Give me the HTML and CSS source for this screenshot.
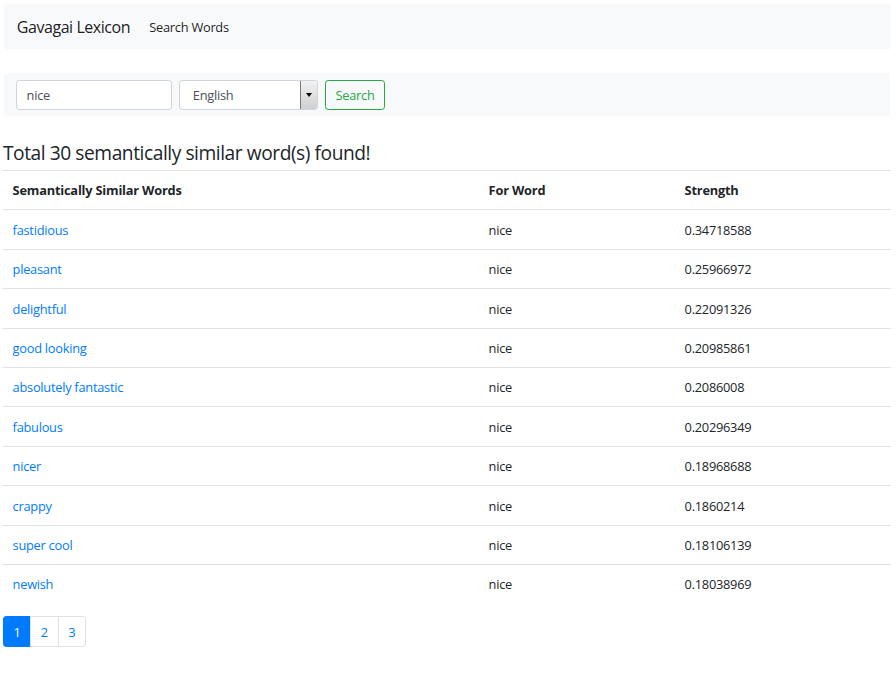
FILE: index.html
```html
<!DOCTYPE html>
<html lang="en">
<head>
<meta charset="utf-8">
<title>Gavagai Lexicon</title>
<link rel="stylesheet" href="styles.css">
</head>
<body>
<nav class="navbar">
  <a class="brand" href="#">Gavagai Lexicon</a>
  <a class="nav-link" href="#">Search Words</a>
</nav>

<form class="search-bar">
  <input class="field word-input" type="text" value="nice">
  <div class="field select">
    <span class="select-value">English</span>
    <span class="select-btn"><span class="caret"></span></span>
  </div>
  <button class="btn-search" type="button">Search</button>
</form>

<main class="content">
  <h4 class="result-title">Total 30 semantically similar word(s) found!</h4>
  <table class="results">
    <colgroup>
      <col class="c1"><col class="c2"><col class="c3">
    </colgroup>
    <thead>
      <tr><th>Semantically Similar Words</th><th>For Word</th><th>Strength</th></tr>
    </thead>
    <tbody>
      <tr><td><a href="#">fastidious</a></td><td>nice</td><td>0.34718588</td></tr>
      <tr><td><a href="#">pleasant</a></td><td>nice</td><td>0.25966972</td></tr>
      <tr><td><a href="#">delightful</a></td><td>nice</td><td>0.22091326</td></tr>
      <tr><td><a href="#">good looking</a></td><td>nice</td><td>0.20985861</td></tr>
      <tr><td><a href="#">absolutely fantastic</a></td><td>nice</td><td>0.2086008</td></tr>
      <tr><td><a href="#">fabulous</a></td><td>nice</td><td>0.20296349</td></tr>
      <tr><td><a href="#">nicer</a></td><td>nice</td><td>0.18968688</td></tr>
      <tr><td><a href="#">crappy</a></td><td>nice</td><td>0.1860214</td></tr>
      <tr><td><a href="#">super cool</a></td><td>nice</td><td>0.18106139</td></tr>
      <tr><td><a href="#">newish</a></td><td>nice</td><td>0.18038969</td></tr>
    </tbody>
  </table>
  <ul class="pagination">
    <li class="page active"><a href="#">1</a></li>
    <li class="page"><a href="#">2</a></li>
    <li class="page"><a href="#">3</a></li>
  </ul>
</main>
</body>
</html>
```

FILE: styles.css
```css
* { box-sizing: border-box; }

html, body {
  margin: 0;
  padding: 0;
  background: #fff;
}

body {
  font-family: "Open Sans", "Noto Sans", sans-serif;
  font-size: 12.8px;
  line-height: 19.2px;
  letter-spacing: -0.25px;
  color: #212529;
}

a { text-decoration: none; color: #007bff; }

.navbar {
  display: flex;
  align-items: center;
  margin: 4px 5px 0 4px;
  height: 45px;
  padding: 2px 12.8px 0;
  background: #f8f9fa;
}

.brand {
  font-size: 16px;
  letter-spacing: -0.45px;
  color: rgba(0, 0, 0, 0.9);
  margin-right: 12.8px;
}

.nav-link {
  padding: 0 6.4px;
  color: rgba(0, 0, 0, 0.9);
}

.search-bar {
  display: flex;
  align-items: center;
  gap: 7px;
  margin: 24px 6px 0 4px;
  height: 43px;
  padding: 0 12px;
  background: #f8f9fa;
}

.field {
  height: 30px;
  border: 1px solid #ced4da;
  border-radius: 3.2px;
  background: #fff;
  font: inherit;
  letter-spacing: inherit;
  color: #495057;
}

.word-input {
  width: 156px;
  padding: 1px 9.6px 0;
  outline: none;
}

.select {
  width: 139px;
  display: flex;
  align-items: center;
  justify-content: space-between;
  padding: 0 0 0 12.8px;
  overflow: hidden;
}

.select-value {
  padding-top: 2px;
}

.select-btn {
  width: 18px;
  height: 30px;
  margin-right: -1px;
  border: 1px solid #7a7a7a;
  background: linear-gradient(#f2f2f2, #cfcfcf);
  display: flex;
  align-items: center;
  justify-content: center;
}

.caret {
  width: 0;
  height: 0;
  border-left: 3.5px solid transparent;
  border-right: 3.5px solid transparent;
  border-top: 4px solid #000;
}

.btn-search {
  height: 30px;
  width: 60px;
  padding: 2px 0 0;
  border: 1px solid #28a745;
  border-radius: 3.2px;
  background: transparent;
  color: #28a745;
  font: inherit;
  letter-spacing: inherit;
}

.content {
  padding: 0 5px 0 3px;
}

.result-title {
  margin: 23.6px 0 6.4px;
  padding-top: 1px;
  height: 24px;
  font-size: 19.2px;
  line-height: 23px;
  letter-spacing: -0.45px;
  font-weight: 400;
}

.results {
  width: 100%;
  border-collapse: collapse;
  margin-bottom: 12.8px;
  table-layout: fixed;
}

.c1 { width: 476px; }
.c2 { width: 196px; }

.results th,
.results td {
  text-align: left;
  padding: 10.4px 9.6px 8.8px;
  border-top: 1px solid #dee2e6;
  vertical-align: top;
}

.results th {
  font-weight: 700;
  letter-spacing: -0.2px;
  border-bottom: 1px solid #dee2e6;
}

.pagination {
  display: flex;
  list-style: none;
  margin: 0;
  padding: 0;
}

.page a {
  display: block;
  padding: 7.2px 9.6px 5.6px;
  line-height: 16px;
  border: 1px solid #dee2e6;
  margin-left: -1px;
  background: #fff;
  color: #007bff;
}

.page:first-child a {
  margin-left: 0;
  border-radius: 3.2px 0 0 3.2px;
}

.page:last-child a {
  border-radius: 0 3.2px 3.2px 0;
}

.page.active a {
  background: #007bff;
  border-color: #007bff;
  color: #fff;
}
```
